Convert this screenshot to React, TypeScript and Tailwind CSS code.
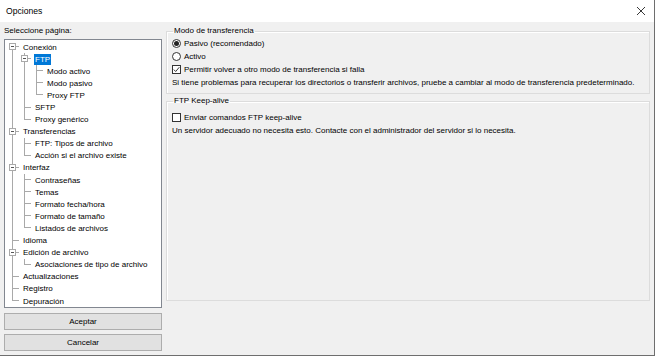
import React from 'react';

// Options dialog (FileZilla style) - left tree of pages, right panel for the FTP page

type Node = { label: string; depth: number; kids?: boolean; last?: boolean; selected?: boolean };

const nodes: Node[] = [
  { label: 'Conexión', depth: 0, kids: true },
  { label: 'FTP', depth: 1, kids: true, selected: true },
  { label: 'Modo activo', depth: 2 },
  { label: 'Modo pasivo', depth: 2 },
  { label: 'Proxy FTP', depth: 2, last: true },
  { label: 'SFTP', depth: 1 },
  { label: 'Proxy genérico', depth: 1, last: true },
  { label: 'Transferencias', depth: 0, kids: true },
  { label: 'FTP: Tipos de archivo', depth: 1 },
  { label: 'Acción si el archivo existe', depth: 1, last: true },
  { label: 'Interfaz', depth: 0, kids: true },
  { label: 'Contraseñas', depth: 1 },
  { label: 'Temas', depth: 1 },
  { label: 'Formato fecha/hora', depth: 1 },
  { label: 'Formato de tamaño', depth: 1 },
  { label: 'Listados de archivos', depth: 1, last: true },
  { label: 'Idioma', depth: 0 },
  { label: 'Edición de archivo', depth: 0, kids: true },
  { label: 'Asociaciones de tipo de archivo', depth: 1, last: true },
  { label: 'Actualizaciones', depth: 0 },
  { label: 'Registro', depth: 0 },
  { label: 'Depuración', depth: 0, last: true },
];

// which ancestor columns still have siblings coming below this row
function openColumns(i: number): boolean[] {
  const cols: boolean[] = [];
  const d = nodes[i].depth;
  for (let lvl = 0; lvl < d; lvl++) {
    let open = false;
    for (let j = i + 1; j < nodes.length; j++) {
      if (nodes[j].depth < lvl) break;
      if (nodes[j].depth === lvl) { open = true; break; }
    }
    cols.push(open);
  }
  return cols;
}

function Cell({ up, down, right, box }: { up: boolean; down: boolean; right: boolean; box?: boolean }) {
  return (
    <div className="relative w-[12px] h-full grid grid-cols-2 grid-rows-2 shrink-0">
      <div className={up ? 'border-r border-[#a9a9a9]' : ''} />
      <div className={right ? 'border-b border-[#a9a9a9]' : ''} />
      <div className={down ? 'border-r border-[#a9a9a9]' : ''} />
      <div />
      {box && (
        <div className="absolute left-[2px] top-[2px] w-[7px] h-[7px] bg-white border border-[#a9a9a9] flex items-center justify-center">
          <div className="w-[3px] h-px bg-[#555]" />
        </div>
      )}
    </div>
  );
}

function TreeRow({ node, index }: { node: Node; index: number }) {
  const cols = openColumns(index);
  return (
    <div className="flex items-center h-[12.1px]">
      {cols.map((open, k) => (
        <Cell key={k} up={open} down={open} right={false} />
      ))}
      <Cell up={index !== 0} down={!node.last} right box={node.kids} />
      <span
        className={`ml-[3px] px-[1px] leading-[11px] whitespace-nowrap ${
          node.selected ? 'bg-[#0078d7] text-white' : 'text-black'
        }`}
      >
        {node.label}
      </span>
    </div>
  );
}

function Radio({ checked }: { checked?: boolean }) {
  return (
    <span className="w-[9px] h-[9px] rounded-full border border-[#333] bg-white flex items-center justify-center shrink-0">
      {checked && <span className="w-[5px] h-[5px] rounded-full bg-[#222]" />}
    </span>
  );
}

function Check({ checked }: { checked?: boolean }) {
  return (
    <span className="w-[9px] h-[9px] border border-[#333] bg-white flex items-center justify-center shrink-0">
      {checked && (
        <svg width="7" height="7" viewBox="0 0 7 7">
          <path d="M0.8 3.6 L2.7 5.5 L6.3 1.2" fill="none" stroke="#222" strokeWidth="0.9" />
        </svg>
      )}
    </span>
  );
}

export default function App() {
  return (
    <div
      className="w-[655px] h-[356px] bg-[#f0f0f0] border-r border-b border-[#6e6e6e] flex flex-col text-[8px] text-black overflow-hidden"
      style={{ fontFamily: '"Liberation Sans", Arial, sans-serif' }}
    >
      {/* title bar */}
      <div className="h-[22px] bg-white flex items-center justify-between pl-[6px] pr-[8px] shrink-0">
        <span className="text-[8.6px]">Opciones</span>
        <svg width="10" height="10" viewBox="0 0 10 10">
          <path d="M1 1 L9 9 M9 1 L1 9" stroke="#222" strokeWidth="0.9" />
        </svg>
      </div>

      <div className="flex flex-1 pl-[4px] pr-[4px] pt-[3px] gap-[4px]">
        {/* left: page tree */}
        <div className="w-[158px] flex flex-col">
          <div className="h-[12px] leading-[12px]">Seleccione página:</div>
          <div className="mt-[2px] h-[269px] bg-white border border-[#828790] pt-[1px] pl-[2px] overflow-hidden">
            {nodes.map((n, i) => (
              <TreeRow key={i} node={n} index={i} />
            ))}
          </div>
          <button className="mt-[5px] h-[17px] bg-[#e1e1e1] border border-[#adadad] text-black">Aceptar</button>
          <button className="mt-[4px] h-[17px] bg-[#e1e1e1] border border-[#adadad] text-black">Cancelar</button>
        </div>

        {/* right: FTP page */}
        <div className="flex-1 flex flex-col">
          <fieldset className="border border-[#dcdcdc] shadow-[inset_1px_1px_0_#fff] px-[5px] pb-[3px]">
            <legend className="ml-[1px] px-[1px] h-[12px] leading-[12px]">Modo de transferencia</legend>
            <div className="h-[13px] flex items-center gap-[3px]">
              <Radio checked />
              <span>Pasivo (recomendado)</span>
            </div>
            <div className="h-[13px] flex items-center gap-[3px]">
              <Radio />
              <span>Activo</span>
            </div>
            <div className="h-[13px] flex items-center gap-[3px]">
              <Check checked />
              <span>Permitir volver a otro modo de transferencia si falla</span>
            </div>
            <div className="h-[14px] flex items-center whitespace-nowrap">
              Si tiene problemas para recuperar los directorios o transferir archivos, pruebe a cambiar al modo de transferencia predeterminado.
            </div>
          </fieldset>

          <fieldset className="mt-[1px] h-[206px] border border-[#dcdcdc] shadow-[inset_1px_1px_0_#fff] px-[5px]">
            <legend className="ml-[1px] px-[1px] h-[12px] leading-[12px]">FTP Keep-alive</legend>
            <div className="mt-[4px] h-[13px] flex items-center gap-[3px]">
              <Check />
              <span>Enviar comandos FTP keep-alive</span>
            </div>
            <div className="h-[13px] flex items-center whitespace-nowrap">
              Un servidor adecuado no necesita esto. Contacte con el administrador del servidor si lo necesita.
            </div>
          </fieldset>
        </div>
      </div>
    </div>
  );
}
